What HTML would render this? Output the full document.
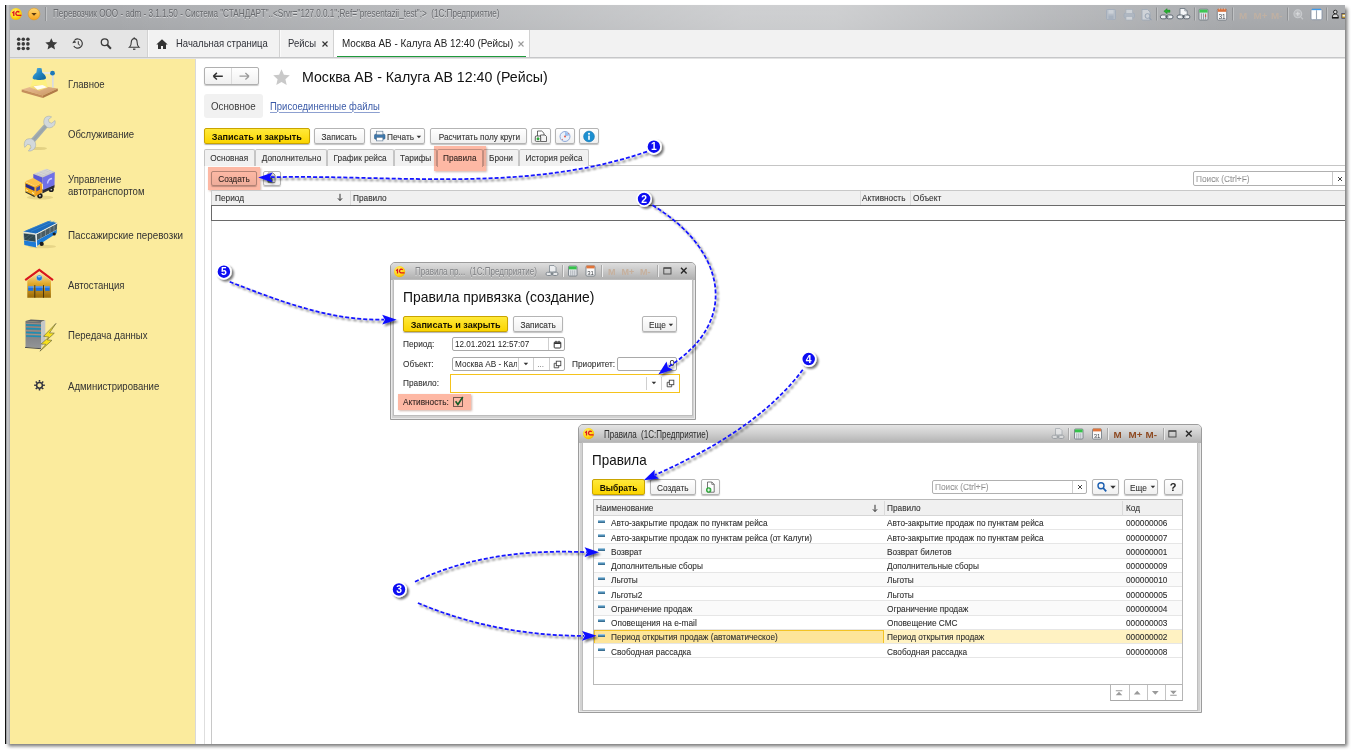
<!DOCTYPE html>
<html><head><meta charset="utf-8">
<style>
*{box-sizing:border-box;margin:0;padding:0}
html,body{width:1354px;height:753px;background:#fff;overflow:hidden}
body{position:relative;font-family:"Liberation Sans",sans-serif;font-size:8.8px;color:#333}
.a{position:absolute}
#shot{position:absolute;left:5px;top:5px;width:1340px;height:739px;overflow:hidden;background:#fff}
#shadow{position:absolute;left:5px;top:5px;width:1340px;height:739px;box-shadow:2.5px 2.5px 3.5px rgba(0,0,0,.55)}
#in{position:absolute;left:-5px;top:-5px;width:1354px;height:753px}
.t{position:absolute;white-space:nowrap;line-height:1}
.sm{color:#303030}
.btn{position:absolute;border:1px solid #b4b4b4;border-radius:2px;background:linear-gradient(#ffffff,#f0f0f0);box-shadow:0 1px 1px rgba(0,0,0,.24)}
.btn .t{left:0;right:0;text-align:center}
.ybtn{position:absolute;border:1px solid #c9a400;border-radius:2px;background:linear-gradient(#ffe93a,#fbd500);box-shadow:0 1px 1px rgba(0,0,0,.3)}
.ybtn .t{left:0;right:0;text-align:center;font-weight:bold;color:#151200;font-size:9.8px}
.inp{position:absolute;border:1px solid #a9a9a9;border-radius:2px;background:#fff}
.hl{position:absolute;background:#fdb8a4;mix-blend-mode:multiply;box-shadow:1px 1px 2px rgba(150,90,70,.45)}
.side{font-size:10px;color:#333;transform:scaleX(.957);transform-origin:0 0}
.sm{transform:scaleX(.838);transform-origin:0 0;margin-top:-.45px}
.btn .t.sm,.ftab .t.sm{transform-origin:50% 0}
.sm{font-size:9.9px;letter-spacing:0;-webkit-text-stroke:.12px #444}
.ftab{position:absolute;top:149px;height:16.500px;border:1px solid #c5c5c5;border-bottom:none;background:#f1f1f1;border-radius:2px 2px 0 0}
.ftab.act{background:#fff;height:17.500px}
.ftab .t{left:0;right:0;text-align:center;top:3px}
.vl{position:absolute;width:1px;background:#c9c9c9}
.hln{position:absolute;height:1px;background:#c9c9c9}
</style></head><body>
<div id="shadow"></div>
<div id="shot"><div id="in">
<!-- window frame -->
<div class="a" style="left:5px;top:5px;width:1340px;height:25px;background:linear-gradient(90deg,rgba(255,255,255,0) 8%,rgba(255,255,255,.2) 34%,rgba(255,255,255,.42) 55%,rgba(255,255,255,.42) 62%,rgba(255,255,255,.18) 78%,rgba(255,255,255,0) 92%),linear-gradient(#acaeb1,#a8aaad 60%,#a4a6a9)"></div>
<div class="a" style="left:5px;top:5px;width:1px;height:739px;background:#111"></div>
<div class="a" style="left:6px;top:5px;width:4px;height:739px;background:linear-gradient(90deg,#8e9093,#c8c9cb 40%,#bfc0c2 70%,#a4a5a8)"></div>
<!-- title icons -->
<svg class="a" style="left:8.500px;top:7.300px" width="14" height="14" viewBox="0 0 14 14"><defs><radialGradient id="g1c" cx=".4" cy=".35" r=".7"><stop offset="0" stop-color="#fff27a"/><stop offset=".6" stop-color="#ffd91a"/><stop offset="1" stop-color="#f0b400"/></radialGradient></defs><circle cx="7" cy="7" r="5.9" fill="url(#g1c)"/><path d="M3.300 6L4.800 4.800V8.900M10.300 5.300A1.900 1.900 0 1 0 8.700 8.300H12.300" stroke="#e0161b" stroke-width="1.350" fill="none"/></svg>
<svg class="a" style="left:26.500px;top:7.300px" width="14" height="14" viewBox="0 0 14 14"><defs><linearGradient id="gdd" x1="0" y1="0" x2="0" y2="1"><stop offset="0" stop-color="#ffd873"/><stop offset="1" stop-color="#f5a21e"/></linearGradient></defs><circle cx="7" cy="7" r="5.9" fill="url(#gdd)" stroke="#d9982c" stroke-width=".6"/><path d="M4.3 6 H9.7 L7 8.8 Z" fill="#5a3a10"/></svg>
<div class="a" style="left:45px;top:7px;width:1px;height:14px;background:#8f9194"></div>
<div class="a" style="left:46px;top:7px;width:1px;height:14px;background:#c2c4c6"></div>
<div class="t" style="left:52.5px;top:7.900px;font-size:11px;transform:scaleX(.74);transform-origin:0 0;color:#686a6e;text-shadow:0 1px 0 rgba(255,255,255,.5)">Перевозчик ООО - adm - 3.1.1.50 - Система "СТАНДАРТ"..&lt;Srvr="127.0.0.1";Ref="presentazii_test";&gt;&nbsp; (1С:Предприятие)</div>
<!-- title bar right icons -->
<svg class="a" style="left:1100px;top:5.500px" width="246" height="18" viewBox="0 0 246 18">
 <!-- save (disabled) -->
 <g opacity=".55"><rect x="6.500" y="3.500" width="9" height="10" rx="1" fill="#b9c6d6" stroke="#8fa2ba" stroke-width=".8"/><rect x="8.500" y="4" width="5" height="3.600" fill="#dfe7f0"/><rect x="8.500" y="9.500" width="5" height="4" fill="#9fb0c6"/></g>
 <!-- print (disabled) -->
 <g opacity=".55"><rect x="24" y="7" width="10.500" height="5" rx="1.500" fill="#aebbcb" stroke="#8fa2ba" stroke-width=".7"/><rect x="26" y="3.500" width="6.500" height="4" fill="#e4eaf1" stroke="#9aabbf" stroke-width=".6"/><rect x="26" y="10.500" width="6.500" height="3.500" fill="#e9eef4" stroke="#9aabbf" stroke-width=".6"/></g>
 <!-- preview (disabled) -->
 <g opacity=".6"><path d="M42 3.500h5.500l2.500 2.500v8h-8z" fill="#e3e9f0" stroke="#8fa2ba" stroke-width=".8"/><circle cx="47.500" cy="10" r="2.400" fill="#dfe7ef" stroke="#7f93ad" stroke-width=".9"/><path d="M49.300 11.900l2.200 2.200" stroke="#7f93ad" stroke-width="1.100"/></g>
 <path d="M56.500 1.500v13" stroke="#8f9194" stroke-width="1"/><path d="M57.500 1.500v13" stroke="#c0c2c4" stroke-width="1"/>
 <!-- link with green arrow -->
 <g><path d="M62.200 9h2.800a1.900 1.900 0 0 1 0 3.800h-2.800a1.900 1.900 0 0 1 0-3.800zM68.300 9h2.800a1.900 1.900 0 0 1 0 3.800h-2.800a1.900 1.900 0 0 1 0-3.800z" fill="#eef1f4" stroke="#4f5a64" stroke-width=".85"/><path d="M65 10.900h3.500" stroke="#4f5a64" stroke-width="1"/><path d="M63.800 5.200l3.300-2.600v1.500h2.900v2.200h-2.900v1.500z" fill="#27b030" stroke="#12821c" stroke-width=".4"/></g>
 <!-- link with doc -->
 <g><path d="M80 2.500h4.800l2.400 2.400v4.800h-7.200z" fill="#f4f6f8" stroke="#66717b" stroke-width=".8"/><path d="M84.800 2.500v2.400h2.400" fill="none" stroke="#66717b" stroke-width=".6"/><path d="M79 9h2.800a1.900 1.900 0 0 1 0 3.800h-2.800a1.900 1.900 0 0 1 0-3.800zM85.200 9h2.800a1.900 1.900 0 0 1 0 3.800h-2.800a1.900 1.900 0 0 1 0-3.800z" fill="#eef1f4" stroke="#4f5a64" stroke-width=".85"/><path d="M81.800 10.900h3.600" stroke="#4f5a64" stroke-width="1"/></g>
 <path d="M94.500 1.500v13" stroke="#8f9194" stroke-width="1"/><path d="M95.500 1.500v13" stroke="#c0c2c4" stroke-width="1"/>
 <!-- calculator -->
 <g><rect x="99" y="3.200" width="9" height="10.800" rx="1" fill="#e3e6ea" stroke="#6b747c" stroke-width=".8"/><rect x="99.400" y="3.600" width="8.200" height="3" fill="#3cc653"/><path d="M101.400 7.500v6M103.500 7.500v6M105.600 7.500v6" stroke="#7d868e" stroke-width=".8"/><path d="M105.600 8.500v2.500" stroke="#d24b3a" stroke-width=".9"/></g>
 <!-- calendar -->
 <g><rect x="117.300" y="3.200" width="9.400" height="10.800" rx="1" fill="#fafafa" stroke="#6b747c" stroke-width=".8"/><rect x="117.700" y="2.800" width="8.600" height="3" fill="#d9713c"/><path d="M119.300 1.900v1.800M122 1.900v1.800M124.700 1.900v1.800" stroke="#f6d9c8" stroke-width=".7"/><text x="122" y="12.500" font-family="Liberation Sans" font-size="6.500" text-anchor="middle" fill="#3a3f45">31</text></g>
 <path d="M132.500 1.500v13" stroke="#8f9194" stroke-width="1"/><path d="M133.500 1.500v13" stroke="#c0c2c4" stroke-width="1"/>
 <g font-family="Liberation Sans" font-size="9.800" font-weight="bold" fill="#bfb0a3"><text x="139" y="12.800">M</text><text x="153.500" y="12.800">M+</text><text x="171" y="12.800">M-</text></g>
 <path d="M187.500 1.500v13" stroke="#8f9194" stroke-width="1"/><path d="M188.500 1.500v13" stroke="#c0c2c4" stroke-width="1"/>
 <!-- zoom -->
 <g><circle cx="197.800" cy="7.800" r="3.900" fill="#b9bbbe" stroke="#c9cbce" stroke-width="1.100"/><path d="M195.700 7.800h4.200M197.800 5.700v4.200" stroke="#dcdddf" stroke-width="1"/><path d="M200.700 10.900l2.200 2.300" stroke="#c4c6c9" stroke-width="1.300"/></g>
 <!-- panel icon -->
 <g><rect x="211" y="3.200" width="11" height="10.500" rx="1.500" fill="#fff" stroke="#7d8da2" stroke-width=".8"/><path d="M212 3.500h9" stroke="#3b9bf0" stroke-width="1.300"/><path d="M216.500 4.200v9.500" stroke="#9aa6b5" stroke-width="1.100"/></g>
 <path d="M226.500 1.500v13" stroke="#8f9194" stroke-width="1"/><path d="M227.500 1.500v13" stroke="#c0c2c4" stroke-width="1"/>
 <!-- user -->
 <g><circle cx="235.300" cy="6" r="1.800" fill="#d8d8d8" stroke="#1a1a1a" stroke-width=".9"/><path d="M232.300 11.500c0-2.600 1.300-3.400 3-3.400s3 .8 3 3.400z" fill="#d8d8d8" stroke="#1a1a1a" stroke-width=".9"/><path d="M232 11.900h6.600" stroke="#111" stroke-width="1.300"/></g>
 <g><rect x="241.800" y="7.500" width="4" height="4.800" fill="#b8922a" stroke="#3b3b5b" stroke-width=".7"/><rect x="242.500" y="8.800" width="3" height="1.800" fill="#f4f0e0"/></g>
</svg>
<!-- toolbar -->
<div class="a" style="left:10px;top:30px;width:1335px;height:28px;background:#f2f2f2"></div>
<div class="a" style="left:10px;top:30px;width:137px;height:27px;background:#e5e5e5"></div>
<div class="a" style="left:10px;top:57px;width:1335px;height:1px;background:#c6c7c9"></div>
<div class="a" style="left:10px;top:58px;width:1335px;height:1px;background:#e3e3e3"></div>
<div class="a" style="left:147px;top:30px;width:1px;height:27px;background:#d2d2d2"></div>
<div class="a" style="left:148px;top:30px;width:1px;height:27px;background:#fafafa"></div>
<div class="a" style="left:279px;top:30px;width:1px;height:27px;background:#d2d2d2"></div>
<div class="a" style="left:280px;top:30px;width:1px;height:27px;background:#fafafa"></div>
<div class="a" style="left:333px;top:30px;width:1px;height:27px;background:#d2d2d2"></div>
<div class="a" style="left:334px;top:30px;width:195px;height:27px;background:#fff"></div>
<div class="a" style="left:529px;top:30px;width:1px;height:27px;background:#d2d2d2"></div>
<div class="a" style="left:337px;top:55.500px;width:189px;height:1.500px;background:#1f9a3c"></div>
<!-- toolbar icons -->
<svg class="a" style="left:14px;top:34px" width="132" height="20" viewBox="0 0 132 20">
 <g fill="#3b3b3b"><circle cx="4.700" cy="5.300" r="1.780"/><circle cx="9.300" cy="5.300" r="1.780"/><circle cx="13.900" cy="5.300" r="1.780"/><circle cx="4.700" cy="9.900" r="1.780"/><circle cx="9.300" cy="9.900" r="1.780"/><circle cx="13.900" cy="9.900" r="1.780"/><circle cx="4.700" cy="14.500" r="1.780"/><circle cx="9.300" cy="14.500" r="1.780"/><circle cx="13.900" cy="14.500" r="1.780"/></g>
 <path d="M37.300 4.200l1.750 3.900 4.250.4-3.200 2.800.95 4.200-3.750-2.200-3.750 2.200.95-4.200-3.200-2.800 4.250-.4z" fill="#3b3b3b"/>
 <g fill="none" stroke="#3b3b3b" stroke-width="1.200"><path d="M60.700 6.100a4.600 4.600 0 1 1-.9 5.900"/><path d="M64.300 7.200v3l1.900 1.200" stroke-width="1"/></g><path d="M58.300 9.200l1.900-3.300 2 2.700z" fill="#3b3b3b"/>
 <g fill="none" stroke="#3b3b3b"><circle cx="90.700" cy="8.300" r="3.400" stroke-width="1.300"/><path d="M93.200 10.800l3.700 3.900" stroke-width="2"/></g>
 <g fill="none" stroke="#3b3b3b" stroke-width="1.100"><path d="M115.500 13.300c1.600-1.300 1.800-2.700 1.800-5.200 0-2.100 1.300-3.500 2.900-3.500s2.900 1.400 2.900 3.500c0 2.500.2 3.900 1.800 5.200z"/><path d="M119 15.200h2.400" stroke-width="1.300"/><path d="M120.200 3.300v1.200"/></g>
</svg>
<svg class="a" style="left:155px;top:37px" width="14" height="14" viewBox="0 0 14 14"><path d="M7 2.200L1.300 7.400h1.700v4.600h3v-3h2v3h3V7.400h1.700z" fill="#333"/></svg>
<div class="t" style="left:175.500px;top:39px;font-size:10.200px;color:#2f3138;transform:scaleX(.93);transform-origin:0 0">Начальная страница</div>
<div class="t" style="left:288px;top:39px;font-size:10.200px;color:#2f3138;transform:scaleX(.93);transform-origin:0 0">Рейсы</div>
<svg class="a" style="left:321px;top:40px" width="8" height="8" viewBox="0 0 8 8"><path d="M1.500 1.500l5 5M6.500 1.500l-5 5" stroke="#333" stroke-width="1.150"/></svg>
<div class="t" style="left:341.500px;top:39px;font-size:10.200px;color:#222;transform:scaleX(.97);transform-origin:0 0">Москва АВ - Калуга АВ 12:40 (Рейсы)</div>
<svg class="a" style="left:517px;top:40px" width="8" height="8" viewBox="0 0 8 8"><path d="M1.500 1.500l5 5M6.500 1.500l-5 5" stroke="#9a9a9a" stroke-width="1.100"/></svg>
<!-- sidebar -->
<div class="a" style="left:10px;top:59px;width:185px;height:686px;background:#fbeb9d"></div>
<div class="a" style="left:195px;top:59px;width:1px;height:686px;background:#d9d9d9"></div>
<div class="t side" style="left:68.300px;top:80.1px">Главное</div>
<div class="t side" style="left:68.300px;top:130.3px">Обслуживание</div>
<div class="t side" style="left:68.300px;top:174.8px">Управление</div>
<div class="t side" style="left:68.300px;top:186.8px">автотранспортом</div>
<div class="t side" style="left:68.300px;top:231.0px;transform:scaleX(.985)">Пассажирские перевозки</div>
<div class="t side" style="left:68.300px;top:281.2px">Автостанция</div>
<div class="t side" style="left:68.300px;top:331.4px">Передача данных</div>
<div class="t side" style="left:68.300px;top:381.6px">Администрирование</div>
<!-- sidebar icons -->
<svg class="a" style="left:10px;top:60px" width="60" height="345" viewBox="10 60 60 345">
<defs>
 <linearGradient id="gShade" x1="0" y1="0" x2="1" y2="1"><stop offset="0" stop-color="#5ab4e4"/><stop offset=".5" stop-color="#2284c0"/><stop offset="1" stop-color="#0f5f98"/></linearGradient>
 <linearGradient id="gWood" x1="0" y1="0" x2="1" y2="1"><stop offset="0" stop-color="#eec39a"/><stop offset="1" stop-color="#c99563"/></linearGradient>
 <linearGradient id="gSil" x1="0" y1="0" x2="1" y2="1"><stop offset="0" stop-color="#e9edef"/><stop offset=".5" stop-color="#98a3a8"/><stop offset="1" stop-color="#d3d9dc"/></linearGradient>
 <linearGradient id="gHouse" x1="0" y1="0" x2="0" y2="1"><stop offset="0" stop-color="#fbe7ae"/><stop offset=".45" stop-color="#e0a92c"/><stop offset="1" stop-color="#9a6a08"/></linearGradient>
 <linearGradient id="gSrv" x1="0" y1="0" x2="0" y2="1"><stop offset="0" stop-color="#6c6e72"/><stop offset="1" stop-color="#939598"/></linearGradient>
 <filter id="soft" x="-20%" y="-20%" width="140%" height="140%"><feGaussianBlur stdDeviation=".35"/></filter>
</defs>
<!-- lamp -->
<g filter="url(#soft)">
 <path d="M21.700 89.400L36.500 85l21.300 3.400-14.900 7z" fill="url(#gWood)"/>
 <path d="M21.700 89.400l21.200 6v2.700l-21.200-6z" fill="#c48e5c"/>
 <path d="M42.900 95.400l14.900-7v2.600l-14.900 7.100z" fill="#b07a48"/>
 <path d="M33.300 78.500h12l2.700 9-8.700 3.200-9.300-3.200z" fill="#fff36e" opacity=".6"/>
 <path d="M33.500 86.300l9-1.300 4.700 2.200-9.600 2.600z" fill="#fffdf4"/>
 <path d="M52 74.500h1.700v13h-1.700z" fill="#d8dbe2"/><path d="M41.500 72.200h10v1.600h-10z" fill="#e6e8ee"/>
 <circle cx="52.500" cy="73.200" r="2.400" fill="#1f78b8"/>
 <path d="M37 68.600c0-.8 4.600-.8 4.600 0l.6 3.800c2 1.300 3.800 3.500 3.800 5.600 0 1.300-3 2-6.700 2s-6.700-.7-6.700-2c0-2.100 1.800-4.300 3.800-5.600z" fill="url(#gShade)"/>
</g>
<!-- wrench -->
<g filter="url(#soft)">
 <ellipse cx="38" cy="148.500" rx="9" ry="1.600" fill="#d9c679" opacity=".7"/>
 <path d="M30.500 139.500L44 124.300l3.600 2.900-13.300 15.600z" fill="url(#gSil)"/>
 <path d="M45.200 117.500c2-1.600 4.700-1.700 6.400-.6l-3.200 2.700.7 2.700 2.600.9 3.300-2.700c.7 2-.1 4.700-2 6.100-2.200 1.600-4.700 1.500-6.300.5l-2.700-3.300c-.6-2.200-.1-4.600 1.200-6.300z" fill="#d2d8db" stroke="#9aa5ab" stroke-width=".5"/>
 <path d="M26 139.800c2-1.400 5.200-1.600 7.200-.2l2 2.600c.8 2.200.7 4.600-.9 6.500-1.600 1.900-4.200 2.700-6 2.300l2.700-3.200-.6-2.700-2.700-.9-2.900 3.200c-.9-2.200-.7-5.600 1.200-7.600z" fill="#d2d8db" stroke="#9aa5ab" stroke-width=".5"/>
</g>
<!-- truck -->
<g filter="url(#soft)">
 <ellipse cx="40" cy="197.500" rx="13" ry="2" fill="#d9c679" opacity=".6"/>
 <circle cx="39.900" cy="195.700" r="2.700" fill="#1a1a1a"/><circle cx="39.900" cy="195.700" r="1" fill="#cfcfcf"/>
 <circle cx="51.200" cy="189.400" r="2.600" fill="#1a1a1a"/><circle cx="51.200" cy="189.400" r="1" fill="#cfcfcf"/>
 <path d="M42.300 189.500l12.200-4.800v2.800l-12.200 6z" fill="#2b2b33"/>
 <path d="M33.300 174l13.200-5.300 8.300 3.300-12.200 5.600z" fill="#c9c9cb"/>
 <path d="M35.500 173.600l11-4.300M38 174.600l11.200-4.500M40.400 175.700l11.500-4.700M37 171.700l8 3.300M40.500 170.400l8 3.200M44 169.200l8 3.100" stroke="#e4e4e6" stroke-width=".35" fill="none"/>
 <path d="M42.600 177.600L54.800 172l-.3 13.100-11.300 4.800z" fill="#6f6fe6"/>
 <path d="M33.300 174l9.300 3.600v6.300l-9.300-4.200z" fill="#5a5ad6"/>
 <path d="M47.500 183.500c.3-2.600 2-4.600 4.600-5" fill="none" stroke="#c8c8ff" stroke-width="1.400"/>
 <path d="M25.200 181.200l8.100-3.300 8.400 4.800-6.600 3.600z" fill="#fbc04a"/>
 <path d="M24.900 182.100l10.200 4.500-.3 9.300-9.600-4.800z" fill="#f6b01f"/>
 <path d="M25.600 183.400l8.900 4-.1 3.700-8.800-4z" fill="#2a2f88"/>
 <path d="M25.400 191.300l9.300 4.400v1.500l-9.300-4.600z" fill="#3a3320"/>
 <path d="M26 189.800l1.800.8M32 192.600l2 .9" stroke="#fff6c8" stroke-width="1"/>
 <path d="M35.100 186.600l6.600-3.600.6 9.300-7.200 4.200z" fill="#f09a1a"/>
 <path d="M36.300 187.700l3.700-2v3.900l-3.700 2z" fill="#3b4aa8"/>
</g>
<!-- bus -->
<g filter="url(#soft)">
 <ellipse cx="42" cy="246.500" rx="14" ry="1.800" fill="#d9c679" opacity=".6"/>
 <path d="M22.900 231.800l25.400-10.700 8.900 1.800-21.500 11z" fill="#1a6cbc"/>
 <path d="M27 230.500l24-10M31 231.300l23.500-10.200" stroke="#4a94d8" stroke-width=".5"/>
 <path d="M36.300 234.500l20.900-11.100-.3 6.300-20 10.800z" fill="#4b5d64"/>
 <path d="M36 234.300l21.200-11.200" stroke="#e6edf2" stroke-width=".9"/>
 <path d="M36.900 240.700l20-10.800" stroke="#dfe8ee" stroke-width=".5"/>
 <path d="M41 232v6.300M45.500 229.600v6.400M50 227.200v6.400M54 225v6.400" stroke="#c9d3d9" stroke-width=".35"/>
 <path d="M36.900 240.500l20-10.800-.3 3.600-19.700 12.600z" fill="#1a7ad6"/>
 <path d="M23.400 233l12.300 1.500.6 7.800L24 240.500z" fill="#2f474f" stroke="#dde6ec" stroke-width=".6"/>
 <path d="M24.500 238.500l6-4.500M27 240.500l6.500-5" stroke="#587078" stroke-width=".5"/>
 <path d="M24 240.500l12.300 1.800.3 5.100-12.300-2.400z" fill="#1a7ad6"/>
 <path d="M35.500 234.200l1.200.2.500 12.800-1.100-.2z" fill="#eef3f7"/>
 <path d="M22.900 231.800l12.800 2.100.8-.4" fill="none" stroke="#e8eef2" stroke-width=".8"/>
 <circle cx="41.700" cy="243.900" r="2.100" fill="#1a1a1a"/><circle cx="54.200" cy="234" r="1.600" fill="#1a1a1a"/>
</g>
<!-- house -->
<g filter="url(#soft)">
 <path d="M27.300 280.600l12-8.600 11.600 8.600v17.100H27.300z" fill="url(#gHouse)"/>
 <path d="M25.200 280.200l14.100-10.300L53 280.200" fill="none" stroke="#d8141c" stroke-width="2.100" stroke-linejoin="miter"/>
 <circle cx="39.300" cy="277.900" r="3" fill="#1a7ae0" stroke="#f8e6b0" stroke-width=".5"/><ellipse cx="39.300" cy="276.600" rx="1.700" ry=".9" fill="#8cc4f6"/>
 <rect x="28.200" y="286.300" width="5.100" height="4.500" fill="#1a6fe0"/><rect x="35.700" y="286.300" width="6.900" height="4.500" fill="#1a6fe0"/><rect x="45" y="286.300" width="4.700" height="4.500" fill="#1a6fe0"/>
 <rect x="28.200" y="286.300" width="21.500" height="1.400" fill="#7db8f5" opacity=".7"/>
 <path d="M34.800 285.100v12.600M43.500 285.100v12.600" stroke="#3a2a08" stroke-width=".9"/>
</g>
<!-- server -->
<g filter="url(#soft)">
 <path d="M25.500 321.100l5.400-1.500 14.400.6-4.200 1.800z" fill="#5d5f62"/>
 <path d="M25.500 321.100l15.600.9v26.300l-15.600-1.200z" fill="url(#gSrv)"/>
 <path d="M41.100 322l4.200-1.800v20l-4.200 8.100z" fill="#c4c6c9"/>
 <path d="M26 324.900l15 .5M26 328.600l15 .5M26 332.400l15 .5M26 335.900l15 .5" stroke="#1d8fb5" stroke-width="1.500"/>
 <path d="M26 323.300l15 .5M26 326.800l15 .5M26 330.600l15 .5M26 334.200l15 .5" stroke="#b59a8a" stroke-width=".7"/>
 <path d="M25 347.400l16 1.300" stroke="#4a4c4f" stroke-width="1"/>
 <path d="M56 323.400L43.500 336.300l5.300.8-7.700 6.900 4.800.3-6 6.900 12-10.800-4.800-.6 7.200-6.600-4.800-.3z" fill="#f8e11e" stroke="#5b5b3a" stroke-width=".6"/>
</g>
<!-- gear -->
<g transform="translate(39.500 385.300)" stroke="#33343f" fill="none">
 <circle r="2.900" stroke-width="1.500"/>
 <path d="M0-3.600V-5.300M0 3.600V5.300M-3.600 0H-5.300M3.600 0H5.300M2.550-2.550L3.750-3.750M-2.550-2.550L-3.750-3.750M2.550 2.550L3.750 3.750M-2.550 2.550L-3.750 3.750" stroke-width="1.500"/>
</g>
</svg>
<!-- main header -->
<div class="btn" style="left:204px;top:67px;width:55px;height:18px;border-color:#b0b0b0;box-shadow:0 1px 1px rgba(0,0,0,.22)"></div>
<div class="a" style="left:231px;top:68px;width:1px;height:16px;background:#dcdcdc"></div>
<svg class="a" style="left:204px;top:67px" width="55" height="18" viewBox="0 0 55 18"><path d="M9.300 9.200h9.500M9.300 9.200l3.600-3.300M9.300 9.200l3.600 3.300" stroke="#333" stroke-width="1.500" fill="none"/><path d="M45 9.200h-9.500M45 9.200l-3.600-3.300M45 9.200l-3.600 3.300" stroke="#9a9a9a" stroke-width="1.300" fill="none"/></svg>
<svg class="a" style="left:272px;top:67.500px" width="19" height="19" viewBox="0 0 19 19"><path d="M9.500 1.300l2.400 5.400 5.900.6-4.400 3.900 1.300 5.800-5.200-3.100-5.200 3.100 1.300-5.800L1.200 7.300l5.900-.6z" fill="#c9c9c9"/></svg>
<div class="t" style="left:302.300px;top:69.500px;font-size:14.400px;color:#111;transform:scaleX(.985);transform-origin:0 0">Москва АВ - Калуга АВ 12:40 (Рейсы)</div>
<div class="a" style="left:204px;top:94px;width:58.500px;height:24px;background:#f1f1f1;border-radius:3px"></div>
<div class="t" style="left:211.200px;top:101.500px;font-size:10px;color:#3b3b3b;transform:scaleX(.975);transform-origin:0 0">Основное</div>
<div class="t" style="left:270.300px;top:101.500px;font-size:10px;color:#3a5aa8;transform:scaleX(.948);transform-origin:0 0;text-decoration:underline;text-decoration-color:#8da0d0;text-underline-offset:1.500px">Присоединенные файлы</div>
<!-- command bar -->
<div class="ybtn" style="left:204px;top:128px;width:105.500px;height:16px"><div class="t" style="top:2.800px;transform:scaleX(.927)">Записать и закрыть</div></div>
<div class="btn" style="left:314px;top:128px;width:50.500px;height:16px"><div class="t sm" style="top:3.300px">Записать</div></div>
<div class="btn" style="left:370px;top:128px;width:55px;height:16px"><div class="t sm" style="top:3.300px;left:16px;right:auto;transform-origin:0 0">Печать</div></div>
<svg class="a" style="left:373px;top:130px" width="14" height="12" viewBox="0 0 14 12"><rect x="1.500" y="4.200" width="10.500" height="5" rx="1.200" fill="#3d78ad" stroke="#2a5a88" stroke-width=".6"/><rect x="3.600" y="1.200" width="6.300" height="3.600" fill="#f2f5f8" stroke="#55728f" stroke-width=".6"/><rect x="3.600" y="7.300" width="6.300" height="3.600" fill="#fff" stroke="#55728f" stroke-width=".6"/></svg>
<svg class="a" style="left:416px;top:135px" width="5.800" height="4.200" viewBox="0 0 7 5"><path d="M.8 1h5.400L3.500 4z" fill="#333"/></svg>
<div class="btn" style="left:430px;top:128px;width:96.500px;height:16px"><div class="t sm" style="top:3.300px">Расчитать полу круги</div></div>
<div class="btn" style="left:531px;top:128px;width:19.500px;height:16px"></div>
<div class="btn" style="left:555px;top:128px;width:19.500px;height:16px"></div>
<div class="btn" style="left:579px;top:128px;width:19.500px;height:16px"></div>
<svg class="a" style="left:534px;top:130px" width="14" height="13" viewBox="0 0 14 13"><path d="M3.500 1h4.200l2.300 2.300v5.200h-6.500z" fill="#fff" stroke="#444" stroke-width=".8"/><path d="M6.500 5h4.500l1.500 1.500v5h-6z" fill="#f4f4f4" stroke="#444" stroke-width=".8"/><rect x="1.300" y="6" width="5.400" height="5.400" rx="1" fill="#fff" stroke="#333" stroke-width=".8"/><circle cx="4" cy="8.700" r="1.500" fill="#2da83a"/></svg>
<svg class="a" style="left:558px;top:130px" width="14" height="13" viewBox="0 0 14 13"><circle cx="7" cy="6.500" r="5" fill="#eaf0fa" stroke="#7d9cd2" stroke-width=".85"/><path d="M7 6.500L7 2a4.500 4.500 0 0 1 4.300 3.200z" fill="#9cc0ee"/><circle cx="7" cy="6.500" r="1" fill="#e45b4b"/><path d="M4 9l1 .8M10 4l.8-.6" stroke="#e45b4b" stroke-width=".8"/></svg>
<svg class="a" style="left:582px;top:130px" width="14" height="13" viewBox="0 0 14 13"><circle cx="7" cy="6.500" r="5.400" fill="#1d8fd0"/><circle cx="7" cy="6.500" r="5.400" fill="none" stroke="#1677b4" stroke-width=".6"/><rect x="6.200" y="5.600" width="1.600" height="4.200" fill="#fff"/><circle cx="7" cy="3.800" r="1" fill="#fff"/></svg>
<!-- form tabs -->
<div class="a" style="left:204px;top:165px;width:1141px;height:1px;background:#c5c5c5"></div>
<div class="a" style="left:204px;top:165px;width:1px;height:580px;background:#dedede"></div>
<div class="ftab" style="left:204px;width:50.500px"><div class="t sm">Основная</div></div>
<div class="ftab" style="left:254.500px;width:72.800px"><div class="t sm">Дополнительно</div></div>
<div class="ftab" style="left:327.300px;width:66.300px"><div class="t sm">График рейса</div></div>
<div class="ftab" style="left:393.600px;width:43.400px"><div class="t sm">Тарифы</div></div>
<div class="ftab act" style="left:437px;width:45.500px"><div class="t sm">Правила</div></div>
<div class="ftab" style="left:482.500px;width:36px"><div class="t sm">Брони</div></div>
<div class="ftab" style="left:518.500px;width:70px"><div class="t sm">История рейса</div></div>
<div class="hl" style="left:434.300px;top:146.300px;width:52px;height:24.600px"></div>
<!-- sub toolbar -->
<div class="btn" style="left:211px;top:170.500px;width:46px;height:15px"><div class="t sm" style="top:2.800px">Создать</div></div>
<div class="btn" style="left:262.500px;top:170.500px;width:18px;height:15px"></div>
<svg class="a" style="left:265px;top:172px" width="13" height="12" viewBox="0 0 13 12"><path d="M3 1h5l2 2v7.500H3z" fill="#f5f5f5" stroke="#777" stroke-width=".8"/><circle cx="5" cy="8" r="2.600" fill="#5a8a5a"/></svg>
<div class="hl" style="left:208.400px;top:166.500px;width:51.600px;height:23px"></div>
<div class="inp" style="left:1192.500px;top:171px;width:160px;height:14.500px;border-color:#b0b0b0"></div>
<div class="a" style="left:1332px;top:172px;width:1px;height:12.500px;background:#c8c8c8"></div>
<div class="t sm" style="left:1195.500px;top:174px;color:#b5b5b5">Поиск (Ctrl+F)</div>
<svg class="a" style="left:1337px;top:176px" width="6" height="6" viewBox="0 0 6 6"><path d="M1 1l4 4M5 1L1 5" stroke="#444" stroke-width="1"/></svg>
<!-- table -->
<div class="a" style="left:211px;top:189.500px;width:1134px;height:16px;background:#f0f0f0;border-top:1px solid #c8c8c8;border-left:1px solid #c8c8c8"></div>
<div class="a" style="left:211px;top:205px;width:1px;height:540px;background:#c8c8c8"></div>
<div class="a" style="left:211px;top:205px;width:1140px;height:15.700px;border:1px solid #6a6a6a;background:#fff"></div>
<div class="vl" style="left:349.500px;top:191px;height:14px;background:#dadada"></div>
<div class="vl" style="left:859.500px;top:191px;height:14px;background:#dadada"></div>
<div class="vl" style="left:910.300px;top:191px;height:14px;background:#dadada"></div>
<div class="t sm" style="left:214.800px;top:193.300px">Период</div>
<div class="t sm" style="left:353px;top:193.300px">Правило</div>
<div class="t sm" style="left:862.300px;top:193.300px">Активность</div>
<div class="t sm" style="left:913px;top:193.300px">Объект</div>
<svg class="a" style="left:337px;top:193px" width="6" height="9" viewBox="0 0 6 9"><path d="M3 .8v6.500M.9 5.300L3 7.600l2.100-2.300" stroke="#333" stroke-width="1" fill="none"/></svg>
<!-- dialog 1 -->
<div class="a" style="left:389.500px;top:261.500px;width:306.500px;height:158.300px;border:1px solid #9c9c9c;border-radius:5px 5px 0 0;background:#d2d2d2;box-shadow:inset 0 0 0 1px #e9e9e9"></div>
<div class="a" style="left:390.500px;top:262.500px;width:304.500px;height:17.500px;border-radius:4px 4px 0 0;background:linear-gradient(#dedede,#c9c9c9 45%,#aeaeae)"></div>
<div class="a" style="left:393.800px;top:280px;width:297.800px;height:135.400px;background:#fff;box-shadow:0 0 0 1px #bdbdbd"></div>
<svg class="a" style="left:393px;top:264.800px" width="13.200" height="13.200" viewBox="0 0 14 14"><circle cx="7" cy="7" r="5.900" fill="url(#g1c)"/><path d="M3.300 6L4.800 4.800V8.900M10.300 5.300A1.900 1.900 0 1 0 8.700 8.300H12.300" stroke="#e0161b" stroke-width="1.350" fill="none"/></svg>
<div class="t" style="left:415.200px;top:266px;font-size:11px;color:#808285;transform:scaleX(.728);transform-origin:0 0;text-shadow:0 1px 0 rgba(255,255,255,.5)">Правила пр...&nbsp; (1С:Предприятие)</div>
<svg class="a" style="left:544px;top:263px" width="150" height="16" viewBox="0 0 150 16">
 <g opacity=".8"><path d="M5.500 2.500h4.500l2 2v4.500h-6.500z" fill="#f4f6f8" stroke="#6b7680" stroke-width=".8"/><path d="M3.600 9.300h2.800a1.600 1.600 0 0 1 0 3.200H3.600a1.600 1.600 0 0 1 0-3.200zM9.600 9.300h2.800a1.600 1.600 0 0 1 0 3.200H9.600a1.600 1.600 0 0 1 0-3.200z" fill="#f2f4f6" stroke="#5a6670" stroke-width=".8"/><path d="M6.400 10.900h3.400" stroke="#5a6670" stroke-width=".9"/></g>
 <path d="M18.500 2v12" stroke="#a9a9a9"/><path d="M19.500 2v12" stroke="#ececec"/>
 <g><rect x="24.500" y="3" width="8.500" height="10" rx="1" fill="#e9ecef" stroke="#6b747c" stroke-width=".8"/><rect x="24.900" y="3.400" width="7.700" height="3" fill="#35c24a"/><path d="M26.800 7.300v5.500M28.800 7.300v5.500M30.800 7.300v5.500" stroke="#8b949c" stroke-width=".7"/></g>
 <g><rect x="42" y="3" width="9" height="10" rx="1" fill="#fafafa" stroke="#6b747c" stroke-width=".8"/><rect x="42.400" y="2.600" width="8.200" height="2.800" fill="#e0743a"/><text x="46.500" y="11.800" font-family="Liberation Sans" font-size="6" text-anchor="middle" fill="#3a3f45">31</text></g>
 <path d="M57.500 2v12" stroke="#a9a9a9"/><path d="M58.500 2v12" stroke="#ececec"/>
 <g font-family="Liberation Sans" font-size="9" font-weight="bold" fill="#c6b09d"><text x="64" y="12">M</text><text x="77.500" y="12">M+</text><text x="96" y="12">M-</text></g>
 <path d="M113.500 2v12" stroke="#a9a9a9"/><path d="M114.500 2v12" stroke="#ececec"/>
 <rect x="119.800" y="4.800" width="7.200" height="6.200" fill="none" stroke="#444" stroke-width=".9"/><path d="M119.800 5.200h7.200" stroke="#444" stroke-width="1.100"/>
 <path d="M137 4.800l5.600 5.600M142.600 4.800l-5.600 5.600" stroke="#2a2a2a" stroke-width="1.450"/>
</svg>
<div class="t" style="left:402.800px;top:290.300px;font-size:14.400px;color:#111;transform:scaleX(.965);transform-origin:0 0">Правила привязка (создание)</div>
<div class="ybtn" style="left:403px;top:316px;width:105.300px;height:15.500px"><div class="t" style="top:2.600px;transform:scaleX(.927)">Записать и закрыть</div></div>
<div class="btn" style="left:513.200px;top:316px;width:50.300px;height:15.500px"><div class="t sm" style="top:3px">Записать</div></div>
<div class="btn" style="left:642.300px;top:316px;width:34.800px;height:15.500px"><div class="t sm" style="top:3px;left:5.500px;right:auto;transform-origin:0 0">Еще</div></div>
<svg class="a" style="left:668px;top:323px" width="5.800" height="4.200" viewBox="0 0 7 5"><path d="M.8 1h5.400L3.500 4z" fill="#333"/></svg>
<div class="t sm" style="left:403px;top:339.700px">Период:</div>
<div class="inp" style="left:452.400px;top:337.200px;width:112.400px;height:14.200px"></div>
<div class="vl" style="left:548.300px;top:338.200px;height:12.200px;background:#cfcfcf"></div>
<div class="t" style="left:455.300px;top:339.700px;font-size:9.900px;color:#222;transform:scaleX(.82);transform-origin:0 0;margin-top:-.4px">12.01.2021 12:57:07</div>
<svg class="a" style="left:552.500px;top:340px" width="9" height="9" viewBox="0 0 9 9"><rect x="1.200" y="2" width="6.600" height="6" rx=".8" fill="none" stroke="#333" stroke-width="1"/><path d="M1.200 3.200h6.600" stroke="#333" stroke-width="1.600"/><path d="M3 .8v1.800M6 .8v1.800" stroke="#333" stroke-width="1"/></svg>
<div class="t sm" style="left:403px;top:359.300px">Объект:</div>
<div class="inp" style="left:452.400px;top:356.800px;width:112.400px;height:14px"></div>
<div class="a" style="left:455.300px;top:359.300px;width:62px;height:10px;overflow:hidden"><div class="t" style="left:0;top:0;font-size:9.900px;color:#222;transform:scaleX(.832);transform-origin:0 0;margin-top:-.4px">Москва АВ - Калуга</div></div>
<div class="vl" style="left:517.700px;top:357.800px;height:12px;background:#cfcfcf"></div>
<div class="vl" style="left:533.300px;top:357.800px;height:12px;background:#cfcfcf"></div>
<div class="vl" style="left:548.800px;top:357.800px;height:12px;background:#cfcfcf"></div>
<svg class="a" style="left:522.700px;top:362.300px" width="5.800" height="4.200" viewBox="0 0 7 5"><path d="M.8 1h5.400L3.500 4z" fill="#333"/></svg>
<div class="t" style="left:537.300px;top:361px;font-size:8px;color:#555">...</div>
<svg class="a" style="left:552.500px;top:359.500px" width="9" height="9" viewBox="0 0 9 9"><rect x="3.300" y="1.200" width="4.500" height="4.500" fill="none" stroke="#444" stroke-width=".9"/><path d="M3.300 3.300H1.200v4.500h4.500V5.700" fill="none" stroke="#444" stroke-width=".9"/></svg>
<div class="t sm" style="left:571.500px;top:359.300px">Приоритет:</div>
<div class="inp" style="left:616.700px;top:356.800px;width:60.600px;height:14px"></div>
<div class="t" style="left:669.500px;top:359.300px;font-size:9.300px;color:#222">0</div>
<div class="t sm" style="left:403px;top:378.700px">Правило:</div>
<div class="a" style="left:450.400px;top:373.600px;width:229.200px;height:19.200px;border:1.800px solid #f5c31c;background:#fff"></div>
<div class="vl" style="left:645.600px;top:376.500px;height:13.500px;background:#cfcfcf"></div>
<div class="vl" style="left:661.400px;top:376.500px;height:13.500px;background:#cfcfcf"></div>
<svg class="a" style="left:650.500px;top:381.300px" width="5.800" height="4.200" viewBox="0 0 7 5"><path d="M.8 1h5.400L3.500 4z" fill="#333"/></svg>
<svg class="a" style="left:665.500px;top:378.500px" width="9" height="9" viewBox="0 0 9 9"><rect x="3.300" y="1.200" width="4.500" height="4.500" fill="none" stroke="#444" stroke-width=".9"/><path d="M3.300 3.300H1.200v4.500h4.500V5.700" fill="none" stroke="#444" stroke-width=".9"/></svg>
<div class="t sm" style="left:403px;top:397.300px">Активность:</div>
<div class="a" style="left:453.400px;top:397px;width:9.600px;height:9.600px;border:1px solid #7a7a7a;background:#fff"></div>
<svg class="a" style="left:453px;top:394.500px" width="12" height="12" viewBox="0 0 12 12"><path d="M2.600 6.300l2.300 3.200L9.800 2" fill="none" stroke="#15803a" stroke-width="1.600"/></svg>
<div class="hl" style="left:397.600px;top:394px;width:73.400px;height:16.400px"></div>
<!-- dialog 2 -->
<div class="a" style="left:578.300px;top:423.800px;width:623.500px;height:289.700px;border:1px solid #9c9c9c;border-radius:5px 5px 0 0;background:#d2d2d2;box-shadow:inset 0 0 0 1px #e9e9e9"></div>
<div class="a" style="left:579.300px;top:424.800px;width:621.500px;height:18.200px;border-radius:4px 4px 0 0;background:linear-gradient(#e4e4e4,#cfcfcf 45%,#b2b2b2)"></div>
<div class="a" style="left:582.600px;top:443px;width:614.800px;height:267px;background:#fff;box-shadow:0 0 0 1px #bdbdbd"></div>
<svg class="a" style="left:582.100px;top:427.300px" width="13.200" height="13.200" viewBox="0 0 14 14"><circle cx="7" cy="7" r="5.900" fill="url(#g1c)"/><path d="M3.300 6L4.800 4.800V8.900M10.300 5.300A1.900 1.900 0 1 0 8.700 8.300H12.300" stroke="#e0161b" stroke-width="1.350" fill="none"/></svg>
<div class="t" style="left:603.900px;top:428.500px;font-size:11px;color:#2b2b2b;transform:scaleX(.73);transform-origin:0 0">Правила&nbsp; (1С:Предприятие)</div>
<svg class="a" style="left:1050px;top:426px" width="150" height="16" viewBox="0 0 150 16">
 <g opacity=".45"><path d="M5.500 2.500h4.500l2 2v4.500h-6.500z" fill="#f4f6f8" stroke="#6b7680" stroke-width=".8"/><path d="M3.600 9.300h2.800a1.600 1.600 0 0 1 0 3.200H3.600a1.600 1.600 0 0 1 0-3.200zM9.600 9.300h2.800a1.600 1.600 0 0 1 0 3.200H9.600a1.600 1.600 0 0 1 0-3.200z" fill="#f2f4f6" stroke="#5a6670" stroke-width=".8"/><path d="M6.400 10.900h3.400" stroke="#5a6670" stroke-width=".9"/></g>
 <path d="M18.500 2v12" stroke="#a9a9a9"/><path d="M19.500 2v12" stroke="#ececec"/>
 <g><rect x="24.500" y="3" width="8.500" height="10" rx="1" fill="#e9ecef" stroke="#6b747c" stroke-width=".8"/><rect x="24.900" y="3.400" width="7.700" height="3" fill="#35c24a"/><path d="M26.800 7.300v5.500M28.800 7.300v5.500M30.800 7.300v5.500" stroke="#8b949c" stroke-width=".7"/></g>
 <g><rect x="42.500" y="3" width="9" height="10" rx="1" fill="#fafafa" stroke="#6b747c" stroke-width=".8"/><rect x="42.900" y="2.600" width="8.200" height="2.800" fill="#e0743a"/><text x="47" y="11.800" font-family="Liberation Sans" font-size="6" text-anchor="middle" fill="#3a3f45">31</text></g>
 <path d="M57.500 2v12" stroke="#a9a9a9"/><path d="M58.500 2v12" stroke="#ececec"/>
 <g font-family="Liberation Sans" font-size="9.800" font-weight="bold" fill="#8e4a22"><text x="63.500" y="12.300">M</text><text x="78.500" y="12.300">M+</text><text x="95.500" y="12.300">M-</text></g>
 <path d="M113.500 2v12" stroke="#a9a9a9"/><path d="M114.500 2v12" stroke="#ececec"/>
 <rect x="118.800" y="4.800" width="7.200" height="6.200" fill="none" stroke="#444" stroke-width=".9"/><path d="M118.800 5.200h7.200" stroke="#444" stroke-width="1.100"/>
 <path d="M136 4.800l5.600 5.600M141.600 4.800l-5.600 5.600" stroke="#2a2a2a" stroke-width="1.450"/>
</svg>
<div class="t" style="left:592.200px;top:452.900px;font-size:14.400px;color:#111;transform:scaleX(.935);transform-origin:0 0">Правила</div>
<div class="ybtn" style="left:592px;top:479px;width:53px;height:15.500px"><div class="t" style="top:2.600px;transform:scaleX(.862)">Выбрать</div></div>
<div class="btn" style="left:650px;top:479px;width:45.700px;height:15.500px"><div class="t sm" style="top:3px">Создать</div></div>
<div class="btn" style="left:700.700px;top:479px;width:19.500px;height:15.500px"></div>
<svg class="a" style="left:704px;top:480.500px" width="13" height="13" viewBox="0 0 13 13"><path d="M3.500 1h4.300l2.400 2.400v7.800H3.500z" fill="#fff" stroke="#555" stroke-width=".8"/><path d="M7.800 1v2.400h2.400" fill="none" stroke="#555" stroke-width=".7"/><circle cx="4.700" cy="9" r="2.700" fill="#2da83a"/><path d="M4.700 7.500v3M3.200 9h3" stroke="#fff" stroke-width=".9"/></svg>
<div class="inp" style="left:931.600px;top:479.800px;width:155.800px;height:14px;border-color:#b0b0b0"></div>
<div class="vl" style="left:1071.800px;top:480.800px;height:12px;background:#cfcfcf"></div>
<div class="t sm" style="left:934.500px;top:482.500px;color:#b5b5b5">Поиск (Ctrl+F)</div>
<svg class="a" style="left:1076.500px;top:484px" width="6" height="6" viewBox="0 0 6 6"><path d="M1 1l4 4M5 1L1 5" stroke="#444" stroke-width="1"/></svg>
<div class="btn" style="left:1092.400px;top:479px;width:26.400px;height:15.500px"></div>
<svg class="a" style="left:1095.500px;top:481px" width="22" height="12" viewBox="0 0 22 12"><circle cx="5" cy="4.800" r="3" fill="none" stroke="#1c5fb0" stroke-width="1.400"/><path d="M7.200 7l3 3.300" stroke="#1c5fb0" stroke-width="1.800"/><path d="M14.300 4.800h5.400L17 7.800z" fill="#333"/></svg>
<div class="btn" style="left:1123.800px;top:479px;width:34.700px;height:15.500px"><div class="t sm" style="top:3px;left:5.500px;right:auto;transform-origin:0 0">Еще</div></div>
<svg class="a" style="left:1149.500px;top:485.300px" width="5.800" height="4.200" viewBox="0 0 7 5"><path d="M.8 1h5.400L3.500 4z" fill="#333"/></svg>
<div class="btn" style="left:1163.500px;top:479px;width:19.400px;height:15.500px"><div class="t" style="top:2px;font-size:11px;font-weight:bold;color:#222">?</div></div>
<div class="a" style="left:592.500px;top:499px;width:590.500px;height:185.700px;border:1px solid #b9b9b9;background:#fff"></div>
<div class="a" style="left:593.500px;top:500px;width:588.500px;height:15.800px;background:#f0f0f0;border-bottom:1px solid #d6d6d6"></div>
<div class="vl" style="left:883.500px;top:501px;height:14.500px;background:#dadada"></div>
<div class="vl" style="left:1122px;top:501px;height:14.500px;background:#dadada"></div>
<div class="t sm" style="left:596px;top:503.700px">Наименование</div>
<div class="t sm" style="left:887px;top:503.700px">Правило</div>
<div class="t sm" style="left:1125.500px;top:503.700px">Код</div>
<svg class="a" style="left:871.500px;top:503.500px" width="6" height="9" viewBox="0 0 6 9"><path d="M3 .8v6.500M.9 5.300L3 7.600l2.100-2.300" stroke="#333" stroke-width="1" fill="none"/></svg>
<div class="hln" style="left:593.500px;top:529.20px;width:588.500px;background:#e6e6e6"></div>
<div class="a" style="left:597.500px;top:519.70px;width:7px;height:3px;background:#4f8fb8;border-top:1px solid #9cc3dc;border-bottom:1px solid #3b6f92;border-radius:.5px"></div>
<div class="t sm" style="left:610.500px;top:518.90px;color:#2a2a2a">Авто-закрытие продаж по пунктам рейса</div>
<div class="t sm" style="left:887px;top:518.90px;color:#2a2a2a">Авто-закрытие продаж по пунктам рейса</div>
<div class="t sm" style="left:1125.500px;top:518.90px;color:#2a2a2a">000000006</div>
<div class="hln" style="left:593.500px;top:543.45px;width:588.500px;background:#e6e6e6"></div>
<div class="a" style="left:597.500px;top:533.95px;width:7px;height:3px;background:#4f8fb8;border-top:1px solid #9cc3dc;border-bottom:1px solid #3b6f92;border-radius:.5px"></div>
<div class="t sm" style="left:610.500px;top:533.15px;color:#2a2a2a">Авто-закрытие продаж по пунктам рейса (от Калуги)</div>
<div class="t sm" style="left:887px;top:533.15px;color:#2a2a2a">Авто-закрытие продаж по пунктам рейса</div>
<div class="t sm" style="left:1125.500px;top:533.15px;color:#2a2a2a">000000007</div>
<div class="a" style="left:593.500px;top:544.00px;width:588.500px;height:14.25px;background:#fafafa"></div>
<div class="hln" style="left:593.500px;top:557.70px;width:588.500px;background:#e6e6e6"></div>
<div class="a" style="left:597.500px;top:548.20px;width:7px;height:3px;background:#4f8fb8;border-top:1px solid #9cc3dc;border-bottom:1px solid #3b6f92;border-radius:.5px"></div>
<div class="t sm" style="left:610.500px;top:547.40px;color:#2a2a2a">Возврат</div>
<div class="t sm" style="left:887px;top:547.40px;color:#2a2a2a">Возврат билетов</div>
<div class="t sm" style="left:1125.500px;top:547.40px;color:#2a2a2a">000000001</div>
<div class="hln" style="left:593.500px;top:571.95px;width:588.500px;background:#e6e6e6"></div>
<div class="a" style="left:597.500px;top:562.45px;width:7px;height:3px;background:#4f8fb8;border-top:1px solid #9cc3dc;border-bottom:1px solid #3b6f92;border-radius:.5px"></div>
<div class="t sm" style="left:610.500px;top:561.65px;color:#2a2a2a">Дополнительные сборы</div>
<div class="t sm" style="left:887px;top:561.65px;color:#2a2a2a">Дополнительные сборы</div>
<div class="t sm" style="left:1125.500px;top:561.65px;color:#2a2a2a">000000009</div>
<div class="a" style="left:593.500px;top:572.50px;width:588.500px;height:14.25px;background:#fafafa"></div>
<div class="hln" style="left:593.500px;top:586.20px;width:588.500px;background:#e6e6e6"></div>
<div class="a" style="left:597.500px;top:576.70px;width:7px;height:3px;background:#4f8fb8;border-top:1px solid #9cc3dc;border-bottom:1px solid #3b6f92;border-radius:.5px"></div>
<div class="t sm" style="left:610.500px;top:575.90px;color:#2a2a2a">Льготы</div>
<div class="t sm" style="left:887px;top:575.90px;color:#2a2a2a">Льготы</div>
<div class="t sm" style="left:1125.500px;top:575.90px;color:#2a2a2a">000000010</div>
<div class="hln" style="left:593.500px;top:600.45px;width:588.500px;background:#e6e6e6"></div>
<div class="a" style="left:597.500px;top:590.95px;width:7px;height:3px;background:#4f8fb8;border-top:1px solid #9cc3dc;border-bottom:1px solid #3b6f92;border-radius:.5px"></div>
<div class="t sm" style="left:610.500px;top:590.15px;color:#2a2a2a">Льготы2</div>
<div class="t sm" style="left:887px;top:590.15px;color:#2a2a2a">Льготы</div>
<div class="t sm" style="left:1125.500px;top:590.15px;color:#2a2a2a">000000005</div>
<div class="a" style="left:593.500px;top:601.00px;width:588.500px;height:14.25px;background:#fafafa"></div>
<div class="hln" style="left:593.500px;top:614.70px;width:588.500px;background:#e6e6e6"></div>
<div class="a" style="left:597.500px;top:605.20px;width:7px;height:3px;background:#4f8fb8;border-top:1px solid #9cc3dc;border-bottom:1px solid #3b6f92;border-radius:.5px"></div>
<div class="t sm" style="left:610.500px;top:604.40px;color:#2a2a2a">Ограничение продаж</div>
<div class="t sm" style="left:887px;top:604.40px;color:#2a2a2a">Ограничение продаж</div>
<div class="t sm" style="left:1125.500px;top:604.40px;color:#2a2a2a">000000004</div>
<div class="hln" style="left:593.500px;top:628.95px;width:588.500px;background:#e6e6e6"></div>
<div class="a" style="left:597.500px;top:619.45px;width:7px;height:3px;background:#4f8fb8;border-top:1px solid #9cc3dc;border-bottom:1px solid #3b6f92;border-radius:.5px"></div>
<div class="t sm" style="left:610.500px;top:618.65px;color:#2a2a2a">Оповещения на e-mail</div>
<div class="t sm" style="left:887px;top:618.65px;color:#2a2a2a">Оповещение СМС</div>
<div class="t sm" style="left:1125.500px;top:618.65px;color:#2a2a2a">000000003</div>
<div class="a" style="left:593.500px;top:629.50px;width:588.500px;height:14.25px;background:#fff2c2"></div>
<div class="a" style="left:593.500px;top:629.50px;width:290px;height:14.25px;background:#fde59a;border:1.300px solid #f3c324"></div>
<div class="hln" style="left:593.500px;top:643.20px;width:588.500px;background:#e6e6e6"></div>
<div class="a" style="left:597.500px;top:633.70px;width:7px;height:3px;background:#4f8fb8;border-top:1px solid #9cc3dc;border-bottom:1px solid #3b6f92;border-radius:.5px"></div>
<div class="t sm" style="left:610.500px;top:632.90px;color:#2a2a2a">Период открытия продаж (автоматическое)</div>
<div class="t sm" style="left:887px;top:632.90px;color:#2a2a2a">Период открытия продаж</div>
<div class="t sm" style="left:1125.500px;top:632.90px;color:#2a2a2a">000000002</div>
<div class="hln" style="left:593.500px;top:657.45px;width:588.500px;background:#e6e6e6"></div>
<div class="a" style="left:597.500px;top:647.95px;width:7px;height:3px;background:#4f8fb8;border-top:1px solid #9cc3dc;border-bottom:1px solid #3b6f92;border-radius:.5px"></div>
<div class="t sm" style="left:610.500px;top:647.15px;color:#2a2a2a">Свободная рассадка</div>
<div class="t sm" style="left:887px;top:647.15px;color:#2a2a2a">Свободная рассадка</div>
<div class="t sm" style="left:1125.500px;top:647.15px;color:#2a2a2a">000000008</div>
<div class="a" style="left:1109.700px;top:684.200px;width:73.300px;height:16.700px;border:1px solid #b5b5b5;border-bottom-color:#a8a8a8;background:#fff"></div>
<div class="vl" style="left:1128.6px;top:685px;height:15.200px;background:#c4c4c4"></div>
<div class="vl" style="left:1146.7px;top:685px;height:15.200px;background:#c4c4c4"></div>
<div class="vl" style="left:1164.8px;top:685px;height:15.200px;background:#c4c4c4"></div>
<svg class="a" style="left:1110.200px;top:684.800px" width="73" height="16" viewBox="0 0 73 16"><g fill="#9a9a9a"><path d="M5.800 5.200h6.500v1H5.800zM9 6.800l3.300 3.400H5.700z"/><path d="M27.200 5.800l3.400 3.600h-6.800z"/><path d="M45.300 9.700l-3.400-3.600h6.800z"/><path d="M60.200 9.800h6.500v1h-6.500zM63.400 9.200l-3.300-3.400h6.600z"/></g></svg>
<!-- annotation arrows -->
<svg class="a" style="left:0;top:0" width="1354" height="753" viewBox="0 0 1354 753">
<defs>
 <filter id="ash" x="-5%" y="-5%" width="110%" height="110%"><feGaussianBlur in="SourceAlpha" stdDeviation="1.100"/><feOffset dx="1.800" dy="1.800"/><feComponentTransfer><feFuncA type="linear" slope=".55"/></feComponentTransfer><feMerge><feMergeNode/><feMergeNode in="SourceGraphic"/></feMerge></filter>
</defs>
<g filter="url(#ash)">
 <g fill="none" stroke="#1212ff" stroke-width="1.750" stroke-dasharray="4 2.050">
  <path d="M647 151.600C526.200 193.300 396.500 174.600 271 177.200"/>
  <path d="M652.500 205.300C722 246.700 743.900 319.500 668 367"/>
  <path d="M415 581.700C469.100 555.800 528.200 549.700 587 552.200"/>
  <path d="M417.900 603C470.300 625 527 636.100 584 635.800"/>
  <path d="M802.800 369.800C765.200 419.200 710.300 450 655 475"/>
  <path d="M229.700 281.800C278.800 300.700 330.300 321 384 319.600"/>
 </g>
 <g fill="#0a0aff">
  <path d="M258.200 177.400L272.600 172.500L269.800 177.400L272.600 182.300Z"/>
  <path d="M658.300 374.400L666.600 361.600L667.700 367.200L672.600 369.400Z"/>
  <path d="M599 552.200L584.600 557.100L587.400 552.200L584.600 547.300Z"/>
  <path d="M596.500 635.800L582.100 640.700L584.900 635.800L582.100 630.900Z"/>
  <path d="M643.800 480.300L654.700 469.700L654.400 475.300L658.900 478.600Z"/>
  <path d="M396.600 319.700L382.200 324.600L385 319.700L382.200 314.800Z"/>
 </g>
 <g>
  <circle cx="653.900" cy="146.700" r="7.100" fill="#0c0cf2" stroke="#fff" stroke-width="1.700"/>
  <circle cx="644.100" cy="199" r="7.100" fill="#0c0cf2" stroke="#fff" stroke-width="1.700"/>
  <circle cx="399" cy="589.500" r="7.100" fill="#0c0cf2" stroke="#fff" stroke-width="1.700"/>
  <circle cx="808.700" cy="359.100" r="7.100" fill="#0c0cf2" stroke="#fff" stroke-width="1.700"/>
  <circle cx="223.900" cy="271.700" r="7.100" fill="#0c0cf2" stroke="#fff" stroke-width="1.700"/>
 </g>
</g>
<g font-family="Liberation Sans" font-size="10.300" font-weight="bold" fill="#fff" text-anchor="middle">
 <text x="653.900" y="150.400">1</text><text x="644.100" y="202.700">2</text><text x="399" y="593.200">3</text><text x="808.700" y="362.800">4</text><text x="223.900" y="275.400">5</text>
</g>
</svg>
</div></div>
</body></html>
